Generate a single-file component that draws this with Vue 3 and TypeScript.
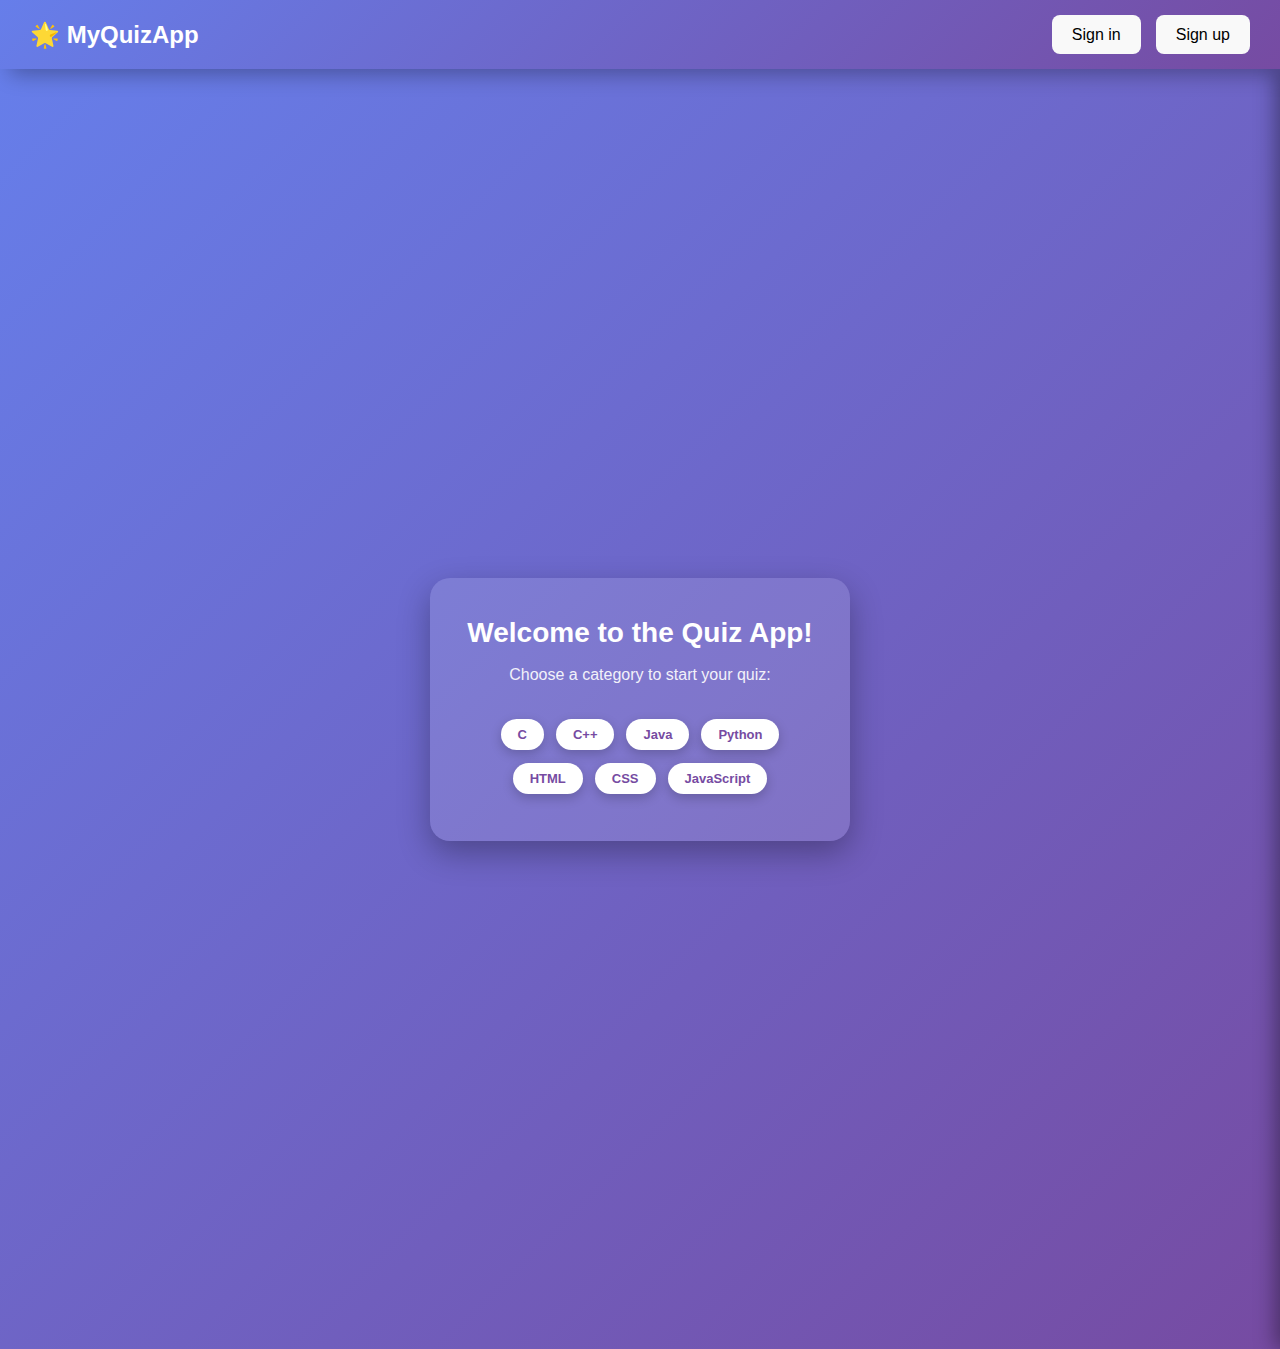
<script setup lang="ts">
const categories: string[] = ['C', 'C++', 'Java', 'Python', 'HTML', 'CSS', 'JavaScript']
</script>

<template>
  <div class="page">
    <header class="navbar">
      <a class="logo" href="#">🌟 MyQuizApp</a>
      <nav class="auth">
        <button type="button" class="auth-button">Sign in</button>
        <button type="button" class="auth-button">Sign up</button>
      </nav>
    </header>
    <main class="stage">
      <section class="card">
        <h1 class="title">Welcome to the Quiz App!</h1>
        <p class="lead">Choose a category to start your quiz:</p>
        <div class="categories">
          <button v-for="name in categories" :key="name" type="button" class="pill">{{ name }}</button>
        </div>
      </section>
      <aside class="drawer" aria-hidden="true"></aside>
    </main>
  </div>
</template>

<style>
body {
  margin: 0;
}
</style>

<style scoped>
.page {
  display: flex;
  flex-direction: column;
  min-height: 100vh;
  font-family: "Liberation Sans", Arial, sans-serif;
}

.navbar {
  position: relative;
  z-index: 1;
  display: flex;
  align-items: center;
  justify-content: space-between;
  padding: 15px 30px;
  background: linear-gradient(135deg, #667eea, #764ba2);
  box-shadow: 10px 5px 20px rgba(0, 0, 0, 0.3);
}

.logo {
  color: #fff;
  font-size: 24px;
  font-weight: bold;
  line-height: 28px;
  text-decoration: none;
}

.auth {
  display: flex;
  gap: 15px;
}

.auth-button {
  padding: 10px 20px;
  border: 0;
  border-radius: 8px;
  background: #f9f9f9;
  color: #000;
  font-family: inherit;
  font-size: 16px;
  line-height: 19px;
  cursor: pointer;
}

.stage {
  position: relative;
  display: flex;
  flex: 1;
  align-items: center;
  justify-content: center;
  overflow: hidden;
  background: linear-gradient(135deg, #667eea, #764ba2);
}

.card {
  box-sizing: border-box;
  width: 100%;
  max-width: 420px;
  padding: 39px 32px 47px;
  border-radius: 20px;
  background: rgba(255, 255, 255, 0.12);
  box-shadow: 0 12px 32px rgba(0, 0, 0, 0.3);
  text-align: center;
}

.title {
  margin: 0 0 16px;
  color: #fff;
  font-size: 28px;
  line-height: 32px;
}

.lead {
  margin: 0 0 35px;
  color: #fff;
  font-size: 16px;
  line-height: 19px;
  opacity: 0.9;
}

.categories {
  display: flex;
  flex-wrap: wrap;
  justify-content: center;
  gap: 13px 12px;
  padding: 0 32px;
}

.pill {
  padding: 8px 17px;
  border: 0;
  border-radius: 16px;
  background: #fff;
  box-shadow: 0 4px 12px rgba(0, 0, 0, 0.2);
  color: #764ba2;
  font-family: inherit;
  font-size: 13px;
  font-weight: bold;
  line-height: 15px;
  cursor: pointer;
}

/* Closed side drawer: parked past the right edge, only its shadow shows. */
.drawer {
  position: absolute;
  top: 0;
  bottom: 0;
  left: 100%;
  width: 280px;
  box-shadow: -4px 0 20px rgba(0, 0, 0, 0.4);
}
</style>
